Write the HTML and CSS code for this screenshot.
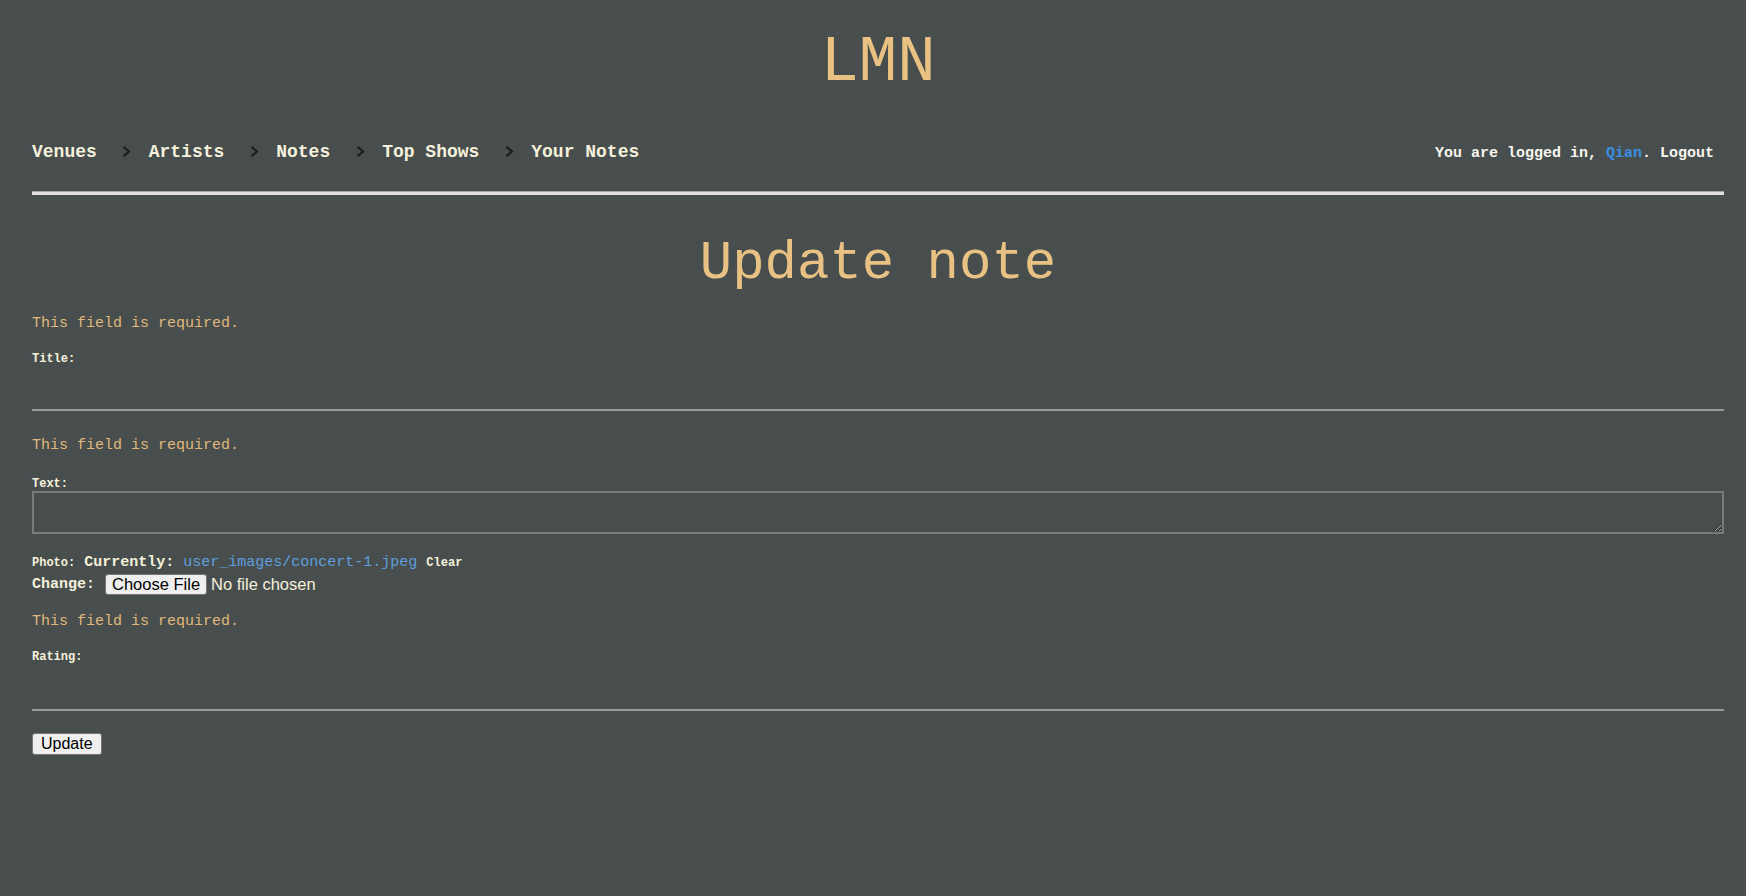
FILE: index.html
```html
<!DOCTYPE html>
<html lang="en">
<head>
<meta charset="utf-8">
<title>LMN - Update note</title>
<link rel="stylesheet" href="styles.css">
</head>
<body>
<div class="page">
  <header class="site-header">
    <h1 class="logo">LMN</h1>
    <nav class="topnav">
      <ul class="crumbs">
        <li class="crumb"><a href="#">Venues</a></li>
        <li class="crumb"><svg class="chev" width="9" height="11" viewBox="0 0 9 11"><polyline points="1.5,0.8 7,5.5 1.5,10.2" fill="none" stroke="#1b1e1d" stroke-width="2.2"/></svg><a href="#">Artists</a></li>
        <li class="crumb"><svg class="chev" width="9" height="11" viewBox="0 0 9 11"><polyline points="1.5,0.8 7,5.5 1.5,10.2" fill="none" stroke="#1b1e1d" stroke-width="2.2"/></svg><a href="#">Notes</a></li>
        <li class="crumb"><svg class="chev" width="9" height="11" viewBox="0 0 9 11"><polyline points="1.5,0.8 7,5.5 1.5,10.2" fill="none" stroke="#1b1e1d" stroke-width="2.2"/></svg><a href="#">Top Shows</a></li>
        <li class="crumb"><svg class="chev" width="9" height="11" viewBox="0 0 9 11"><polyline points="1.5,0.8 7,5.5 1.5,10.2" fill="none" stroke="#1b1e1d" stroke-width="2.2"/></svg><a href="#">Your Notes</a></li>
      </ul>
      <p class="login">You are logged in, <a class="user" href="#">Qian</a>. <a class="logout" href="#">Logout</a></p>
    </nav>
    <hr class="divider">
  </header>

  <main class="content">
    <h2 class="page-title">Update note</h2>
    <form class="note-form">
      <p class="error error-first">This field is required.</p>
      <label class="field-label" for="title">Title:</label>
      <input class="line-input title-input" type="text" id="title" name="title">

      <p class="error error-after-input">This field is required.</p>
      <label class="field-label label-text" for="text">Text:</label>
      <textarea class="text-area" id="text" name="text"></textarea>

      <div class="photo">
        <p class="photo-line"><span class="small-label">Photo:</span> <span class="strong">Currently:</span> <a class="file-link" href="#">user_images/concert-1.jpeg</a> <span class="small-label">Clear</span></p>
        <p class="photo-line"><span class="strong">Change:</span> <input class="file-input" type="file" name="photo"></p>
      </div>

      <p class="error error-after-photo">This field is required.</p>
      <label class="field-label" for="rating">Rating:</label>
      <input class="line-input" type="text" id="rating" name="rating">

      <div class="actions">
        <button class="submit" type="submit">Update</button>
      </div>
    </form>
  </main>
</div>
</body>
</html>
```

FILE: styles.css
```css
html, body {
  margin: 0;
  padding: 0;
  background: #474e4d;
}

body {
  font-family: "Liberation Mono", "Courier New", monospace;
  color: #f6f1dc;
}

.page {
  padding: 0 22px 0 32px;
}

.site-header {
  display: flex;
  flex-direction: column;
}

.logo {
  margin: 0;
  padding-top: 31px;
  font-size: 64px;
  line-height: 64px;
  font-weight: normal;
  text-align: center;
  color: #e9c283;
}

.topnav {
  margin-top: 47px;
  display: flex;
  justify-content: space-between;
  align-items: baseline;
  line-height: 20px;
}

.crumbs {
  list-style: none;
  margin: 0;
  padding: 0;
  display: flex;
  align-items: baseline;
}

.crumb {
  display: flex;
  align-items: baseline;
  font-size: 18px;
  font-weight: bold;
}

.crumb a {
  color: #f6f1dc;
  text-decoration: none;
}

.chev {
  margin: 0 17.4px 0 25.5px;
  display: block;
  align-self: baseline;
}

.login {
  margin: 0;
  padding-right: 10px;
  font-size: 15px;
  font-weight: bold;
  color: #f8f6ee;
}

.login a {
  text-decoration: none;
}

.user {
  color: #3b8fe4;
}

.logout {
  color: #f8f6ee;
}

.divider {
  margin: 27px 0 0;
  height: 0;
  border: 0;
  border-top: 1px solid #a3a3a3;
  border-bottom: 3px solid #e0e0e0;
}

.content {
  display: flex;
  flex-direction: column;
}

.page-title {
  margin: 39px 0 0;
  font-size: 54px;
  line-height: 60px;
  font-weight: normal;
  text-align: center;
  color: #e9c283;
}

.note-form {
  display: flex;
  flex-direction: column;
}

.error {
  margin: 0;
  font-size: 15px;
  line-height: 18px;
  color: #e0b87b;
}

.error-first {
  margin-top: 21px;
}

.error-after-input {
  margin-top: 26px;
}

.error-after-photo {
  margin-top: 18px;
}

.field-label {
  margin-top: 19px;
  font-size: 12px;
  line-height: 14px;
  font-weight: bold;
  color: #f6f1dc;
}

.label-text {
  margin-top: 22px;
}

.line-input {
  box-sizing: border-box;
  width: 100%;
  height: 47px;
  margin: 0;
  padding: 0;
  border: 0;
  border-bottom: 2px solid #9a9a9a;
  background: transparent;
  color: #f6f1dc;
  font: inherit;
}

.title-input {
  height: 45px;
}

.text-area {
  box-sizing: border-box;
  display: block;
  width: 100%;
  height: 43px;
  margin: 0;
  padding: 2px;
  border: 2px solid #777b7a;
  background: transparent;
  color: #f6f1dc;
  font: inherit;
}

.photo {
  margin-top: 18px;
}

.photo-line {
  margin: 0;
  font-size: 15px;
  line-height: 21px;
}

.small-label {
  font-size: 12px;
  font-weight: bold;
}

.strong {
  font-weight: bold;
}

.file-link {
  color: #5f9ede;
  text-decoration: none;
}

.file-input {
  font-family: "Liberation Sans", Arial, sans-serif;
  font-size: 16.5px;
  color: #f6f1dc;
  margin: 0 0 0 1px;
  vertical-align: top;
}

.file-input::file-selector-button {
  font: inherit;
  color: #000;
  background: #efefef;
  border: 1px solid #767676;
  border-radius: 3px;
  padding: 0 6px;
  margin-right: 4px;
}

.actions {
  margin-top: 22px;
}

.submit {
  font-family: "Liberation Sans", Arial, sans-serif;
  font-size: 16px;
  color: #000;
  background: #efefef;
  border: 1px solid #767676;
  border-radius: 3px;
  padding: 1px 8px;
  margin: 0;
}
```
